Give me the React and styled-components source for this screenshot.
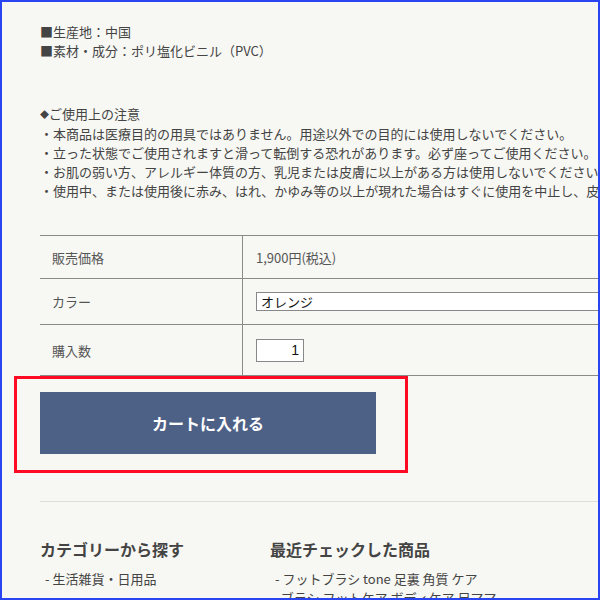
import styled, { createGlobalStyle } from "styled-components";

const GlobalStyle = createGlobalStyle`
  html, body {
    margin: 0;
    padding: 0;
    background: #f7f7f3;
    overflow: hidden;
  }
  body {
    font-family: "Noto Sans CJK JP", "Noto Sans", sans-serif;
    color: #444;
  }
`;

const Frame = styled.div`
  position: fixed;
  inset: 0;
  border: 2px solid #2b44f2;
  pointer-events: none;
  z-index: 10;
`;

const Page = styled.div`
  width: 600px;
  height: 600px;
  overflow: hidden;
  padding: 22px 0 0 40px;
  box-sizing: border-box;
`;

const TextBlock = styled.div`
  font-size: 13px;
  line-height: 19px;
  white-space: nowrap;
  margin-bottom: ${(p) => p.gap || 0}px;
`;

const Diamond = styled.span`
  font-size: 9px;
  vertical-align: 1px;
`;

const Table = styled.table`
  border-collapse: collapse;
  width: 640px;
  font-size: 13px;
  color: #555;
`;

const Row = styled.tr`
  height: ${(p) => p.h}px;
  border-top: 1px solid #8a8a86;
  border-bottom: 1px solid #8a8a86;
`;

const Head = styled.th`
  width: 190px;
  padding: 0 0 0 12px;
  text-align: left;
  font-weight: normal;
  border-right: 1px solid #8a8a86;
`;

const Cell = styled.td`
  padding: 0 0 0 13px;
`;

const Select = styled.div`
  width: 360px;
  height: 17px;
  border: 1px solid #888;
  background: #fff;
  font-size: 13px;
  line-height: 17px;
  padding-left: 4px;
  color: #111;
  box-sizing: content-box;
`;

const QtyInput = styled.input`
  width: 42px;
  height: 21px;
  border: 1px solid #888;
  background: #fff;
  font-family: "Liberation Sans", sans-serif;
  font-size: 14px;
  text-align: right;
  padding: 0 4px 0 0;
  color: #111;
  outline: none;
  box-sizing: content-box;
`;

const Highlight = styled.div`
  width: 394px;
  margin-left: -26px;
  border: 3px solid #ff0a24;
  padding: 13px 0 16px 23px;
  box-sizing: border-box;
`;

const CartButton = styled.button`
  width: 336px;
  height: 62px;
  border: none;
  background: #4d6187;
  color: #fff;
  font-family: "Noto Sans CJK JP", sans-serif;
  font-weight: bold;
  font-size: 16px;
  cursor: pointer;
`;

const Divider = styled.hr`
  margin: 28px 0 0 0;
  width: 600px;
  border: none;
  border-top: 1px solid #dcdcd8;
`;

const Columns = styled.div`
  display: flex;
  padding-top: 36px;
`;

const Column = styled.div`
  width: ${(p) => p.w}px;
`;

const ColTitle = styled.h3`
  margin: 0 0 9px;
  font-size: 16px;
  line-height: 22px;
  font-weight: bold;
  color: #444;
`;

const List = styled.ul`
  list-style: none;
  margin: 0;
  padding: 0 0 0 5px;
  font-size: 13px;
  line-height: 19px;
  white-space: nowrap;
`;

export default function App() {
  return (
    <>
      <GlobalStyle />
      <Frame />
      <Page>
        <TextBlock gap={44}>
          ■生産地：中国
          <br />
          ■素材・成分：ポリ塩化ビニル（PVC）
        </TextBlock>
        <TextBlock gap={35}>
          <Diamond>◆</Diamond>ご使用上の注意
          <br />
          ・本商品は医療目的の用具ではありません。用途以外での目的には使用しないでください。
          <br />
          ・立った状態でご使用されますと滑って転倒する恐れがあります。必ず座ってご使用ください。
          <br />
          ・お肌の弱い方、アレルギー体質の方、乳児または皮膚に以上がある方は使用しないでください。
          <br />
          ・使用中、または使用後に赤み、はれ、かゆみ等の以上が現れた場合はすぐに使用を中止し、皮膚科医にご相談ください。
        </TextBlock>
        <Table>
          <tbody>
            <Row h={43}>
              <Head>販売価格</Head>
              <Cell>1,900円(税込)</Cell>
            </Row>
            <Row h={46}>
              <Head>カラー</Head>
              <Cell>
                <Select>オレンジ</Select>
              </Cell>
            </Row>
            <Row h={51}>
              <Head>購入数</Head>
              <Cell>
                <QtyInput defaultValue="1" />
              </Cell>
            </Row>
          </tbody>
        </Table>
        <Highlight>
          <CartButton>カートに入れる</CartButton>
        </Highlight>
        <Divider />
        <Columns>
          <Column w={230}>
            <ColTitle>カテゴリーから探す</ColTitle>
            <List>
              <li>- 生活雑貨・日用品</li>
            </List>
          </Column>
          <Column w={330}>
            <ColTitle>最近チェックした商品</ColTitle>
            <List>
              <li>- フットブラシ tone 足裏 角質 ケア</li>
              <li>&nbsp;&nbsp;ブラシ フットケア ボディケア 足ママ</li>
            </List>
          </Column>
        </Columns>
      </Page>
    </>
  );
}
